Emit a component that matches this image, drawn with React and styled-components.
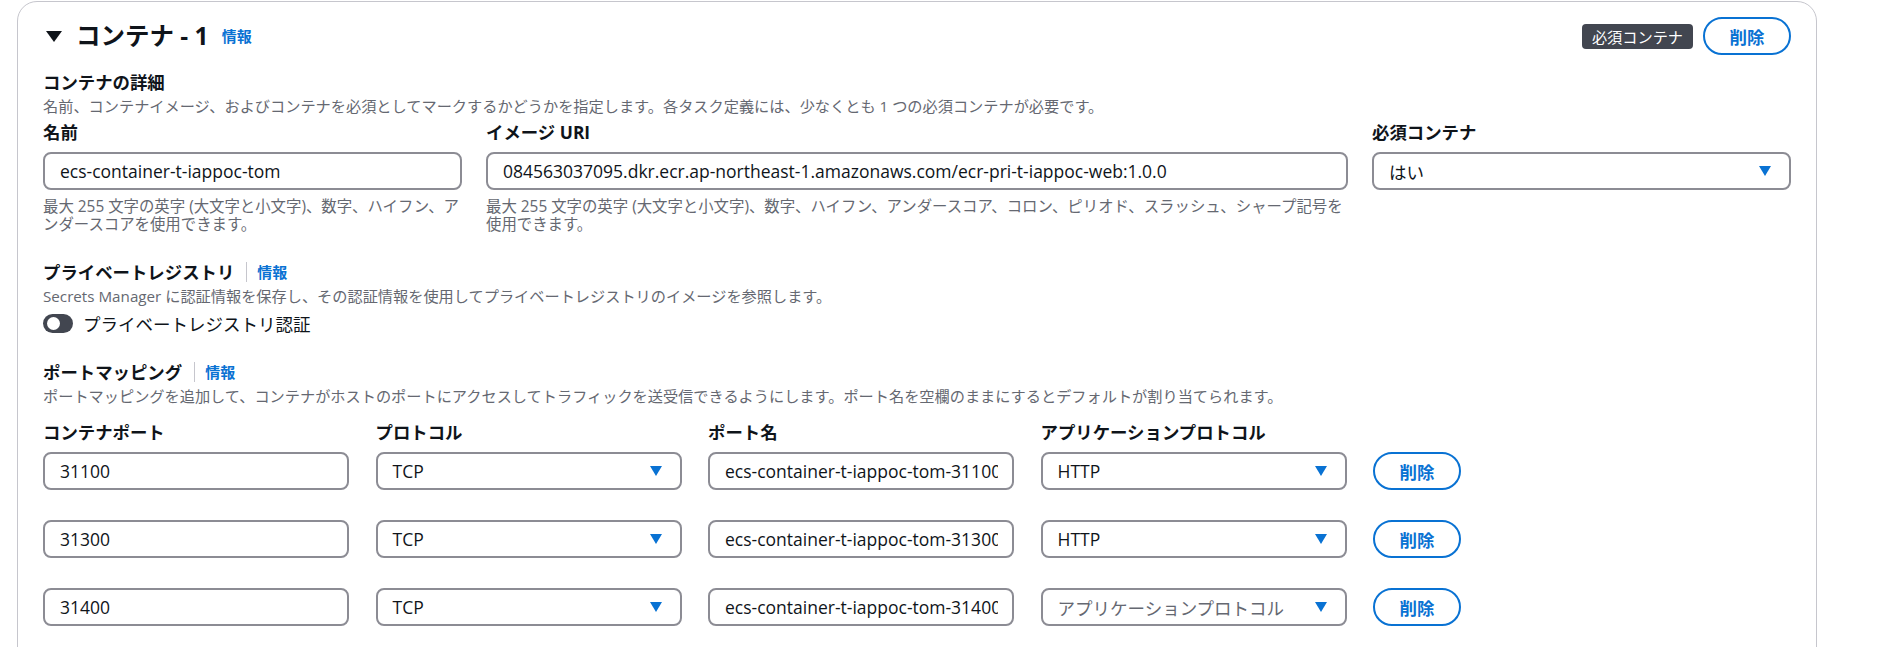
import styled, { createGlobalStyle } from "styled-components";

const GlobalStyle = createGlobalStyle`
    html, body {
        margin: 0;
        padding: 0;
        background: #fff;
        overflow: hidden;
    }
    body {
        font-family: "Open Sans", "Noto Sans CJK JP", sans-serif;
        color: #000716;
    }
    * {
        box-sizing: border-box;
    }
`;

const portRows = [
    { port: "31100", protocol: "TCP", name: "ecs-container-t-iappoc-tom-31100", app: "HTTP" },
    { port: "31300", protocol: "TCP", name: "ecs-container-t-iappoc-tom-31300", app: "HTTP" },
    { port: "31400", protocol: "TCP", name: "ecs-container-t-iappoc-tom-31400", app: "" },
];

function Caret(){
    return (
        <svg width="16" height="11" viewBox="0 0 16 11">
            <polygon points="0,0 16,0 8,11" fill="#0f141a" />
        </svg>
    );
}

function SelectBox({ value, placeholder }){
    return (
        <Select>
            <SelectValue $empty={!value}>{value || placeholder}</SelectValue>
            <svg width="12" height="10" viewBox="0 0 12 10">
                <polygon points="0,0 12,0 6,10" fill="#0972d3" />
            </svg>
        </Select>
    );
}

function InfoTitle({ children }){
    return (
        <LabelRow>
            <SectionLabel>{children}</SectionLabel>
            <Divider />
            <InfoLink>情報</InfoLink>
        </LabelRow>
    );
}

export default function App(){
    return (
        <>
            <GlobalStyle />
            <Card>
                <Header>
                    <TitleGroup>
                        <Caret />
                        <Title>コンテナ - 1</Title>
                        <InfoLink>情報</InfoLink>
                    </TitleGroup>
                    <Actions>
                        <Badge>必須コンテナ</Badge>
                        <DeleteButton>削除</DeleteButton>
                    </Actions>
                </Header>

                <Section $top={16}>
                    <SectionLabel>コンテナの詳細</SectionLabel>
                    <Description>名前、コンテナイメージ、およびコンテナを必須としてマークするかどうかを指定します。各タスク定義には、少なくとも 1 つの必須コンテナが必要です。</Description>
                    <DetailsGrid>
                        <Field>
                            <FieldLabel>名前</FieldLabel>
                            <Input readOnly value="ecs-container-t-iappoc-tom" />
                            <Constraint>最大 255 文字の英字 (大文字と小文字)、数字、ハイフン、アンダースコアを使用できます。</Constraint>
                        </Field>
                        <Field $span={2}>
                            <FieldLabel>イメージ URI</FieldLabel>
                            <Input readOnly value="084563037095.dkr.ecr.ap-northeast-1.amazonaws.com/ecr-pri-t-iappoc-web:1.0.0" />
                            <Constraint>最大 255 文字の英字 (大文字と小文字)、数字、ハイフン、アンダースコア、コロン、ピリオド、スラッシュ、シャープ記号を使用できます。</Constraint>
                        </Field>
                        <Field>
                            <FieldLabel>必須コンテナ</FieldLabel>
                            <SelectBox value="はい" />
                        </Field>
                    </DetailsGrid>
                </Section>

                <Section $top={27}>
                    <InfoTitle>プライベートレジストリ</InfoTitle>
                    <Description>Secrets Manager に認証情報を保存し、その認証情報を使用してプライベートレジストリのイメージを参照します。</Description>
                    <ToggleRow>
                        <Toggle><Knob /></Toggle>
                        <span>プライベートレジストリ認証</span>
                    </ToggleRow>
                </Section>

                <Section $top={26}>
                    <InfoTitle>ポートマッピング</InfoTitle>
                    <Description>ポートマッピングを追加して、コンテナがホストのポートにアクセスしてトラフィックを送受信できるようにします。ポート名を空欄のままにするとデフォルトが割り当てられます。</Description>
                    <PortGrid $head>
                        <FieldLabel>コンテナポート</FieldLabel>
                        <FieldLabel>プロトコル</FieldLabel>
                        <FieldLabel>ポート名</FieldLabel>
                        <FieldLabel>アプリケーションプロトコル</FieldLabel>
                    </PortGrid>
                    <PortRows>
                        {portRows.map(r => (
                            <PortGrid key={r.port}>
                                <Input readOnly value={r.port} />
                                <SelectBox value={r.protocol} />
                                <Input readOnly value={r.name} $tight />
                                <SelectBox value={r.app} placeholder="アプリケーションプロトコル" />
                                <DeleteButton>削除</DeleteButton>
                            </PortGrid>
                        ))}
                    </PortRows>
                </Section>
            </Card>
        </>
    );
}

const Card = styled.div`
    margin: 1px 0 0 17px;
    width: 1800px;
    min-height: 720px;
    border: 1px solid #c6c6cd;
    border-radius: 20px;
    padding: 15px 25px 40px 25px;
    background: #fff;
`;

const Header = styled.div`
    display: flex;
    justify-content: space-between;
    align-items: center;
    height: 38px;
`;

const TitleGroup = styled.div`
    display: flex;
    align-items: center;
    padding-left: 3px;

    svg{
        margin-right: 14px;
    }
`;

const Title = styled.h2`
    margin: 0 13px 0 0;
    font-size: 24.5px;
    font-weight: 700;
    line-height: 38px;
    color: #0f141a;
`;

const InfoLink = styled.a`
    color: #0972d3;
    font-size: 15px;
    font-weight: 700;
    line-height: 22px;
    cursor: pointer;
`;

const Actions = styled.div`
    display: flex;
    align-items: center;
    gap: 10px;
`;

const Badge = styled.span`
    display: inline-flex;
    align-items: center;
    height: 25px;
    padding: 0 10px;
    background: #424650;
    color: #fff;
    font-size: 15.2px;
    border-radius: 4px;
`;

const DeleteButton = styled.button`
    width: 88px;
    height: 38px;
    border: 2px solid #0972d3;
    border-radius: 20px;
    background: #fff;
    color: #0972d3;
    font-family: inherit;
    font-size: 17.5px;
    font-weight: 700;
    padding: 0;
    cursor: pointer;
`;

const Section = styled.section`
    margin-top: ${p => p.$top}px;
`;

const LabelRow = styled.div`
    display: flex;
    align-items: center;
`;

const SectionLabel = styled.div`
    font-size: 17.4px;
    font-weight: 700;
    line-height: 22px;
    color: #0f141a;
`;

const Divider = styled.span`
    width: 1px;
    height: 20px;
    background: #c6c6cd;
    margin: 0 10px 0 12px;
`;

const Description = styled.p`
    margin: 2px 0 0;
    font-size: 15.2px;
    line-height: 22px;
    color: #656871;
`;

const DetailsGrid = styled.div`
    display: grid;
    grid-template-columns: repeat(4, 1fr);
    column-gap: 24px;
    margin-top: 4px;
`;

const Field = styled.div`
    grid-column: span ${p => p.$span || 1};
    display: flex;
    flex-direction: column;
    gap: 9px;
`;

const FieldLabel = styled.label`
    font-size: 17.4px;
    font-weight: 700;
    line-height: 22px;
    color: #0f141a;
`;

const Input = styled.input`
    width: 100%;
    height: 38px;
    border: 2px solid #8c8c94;
    border-radius: 8px;
    padding: 0 ${p => p.$tight ? "14px" : "15px"} 0 15px;
    font-family: inherit;
    font-size: 17.5px;
    color: #0f141a;
    background: #fff;
    outline: none;
`;

const Select = styled.div`
    display: flex;
    align-items: center;
    justify-content: space-between;
    height: 38px;
    border: 2px solid #8c8c94;
    border-radius: 8px;
    padding: 0 18px 0 15px;
    background: #fff;
`;

const SelectValue = styled.span`
    font-size: 17.5px;
    color: ${p => p.$empty ? "#656871" : "#0f141a"};
    white-space: nowrap;
`;

const Constraint = styled.p`
    margin: -1px 0 0;
    font-size: 15.4px;
    line-height: 18px;
    color: #656871;
`;

const ToggleRow = styled.div`
    display: flex;
    align-items: center;
    gap: 10px;
    margin-top: 4px;
    height: 24px;
    font-size: 17.5px;
    color: #0f141a;
`;

const Toggle = styled.span`
    display: flex;
    align-items: center;
    width: 30px;
    height: 19px;
    border-radius: 10px;
    background: #424650;
    padding-left: 4px;
`;

const Knob = styled.span`
    width: 13px;
    height: 13px;
    border-radius: 50%;
    background: #fff;
`;

const PortGrid = styled.div`
    display: grid;
    grid-template-columns: repeat(4, 306px) 88px;
    column-gap: 26.5px;
    align-items: center;
    margin-top: ${p => p.$head ? "14px" : "0"};
`;

const PortRows = styled.div`
    display: flex;
    flex-direction: column;
    gap: 30px;
    margin-top: 9px;
`;
